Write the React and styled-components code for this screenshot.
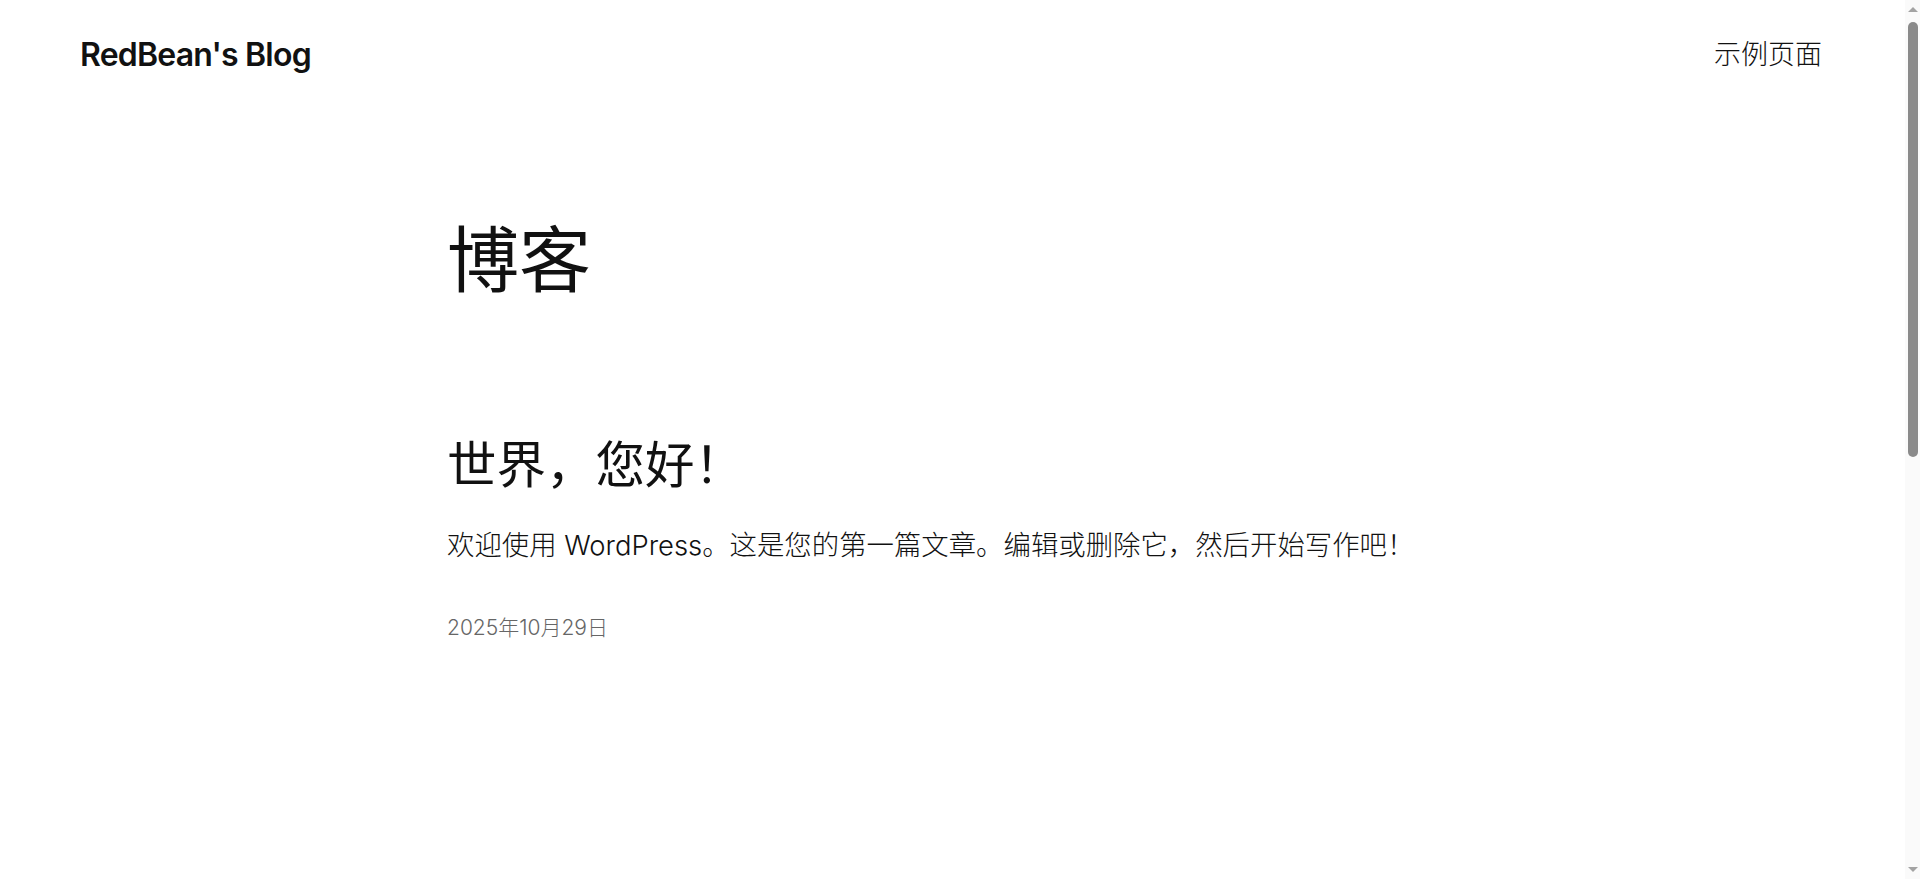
import React from 'react'
import styled, { createGlobalStyle } from 'styled-components'

const GlobalStyle = createGlobalStyle`
  html, body {
    margin: 0;
    padding: 0;
    background: #fff;
  }
  body {
    font-family: Inter, "Noto Sans CJK SC", sans-serif;
    color: #111;
  }
  * { box-sizing: border-box; }
`

// classic 15px scrollbar gutter, drawn over the right edge like the browser's own
const Scrollbar = styled.div`
  position: fixed;
  top: 0;
  right: 0;
  width: 15px;
  height: 100vh;
  background: #fafafa;
  display: flex;
  flex-direction: column;
  align-items: center;
`

const Arrow = styled.div`
  width: 0;
  height: 0;
  margin: ${(p) => (p.$down ? 'auto 0 7px' : '7px 0 0')};
  border-left: 5px solid transparent;
  border-right: 5px solid transparent;
  ${(p) =>
    p.$down
      ? 'border-top: 5px solid #a3a3a3;'
      : 'border-bottom: 5px solid #a3a3a3;'}
`

const Thumb = styled.div`
  width: 10px;
  height: 435px;
  margin-top: 10px;
  border-radius: 5px;
  background: #8a8a8a;
`

const Page = styled.div`
  min-height: 1707px;
  padding-right: 15px;
  display: flex;
  flex-direction: column;
`

const Header = styled.header`
  height: 110px;
  display: flex;
  align-items: center;
  justify-content: space-between;
  padding: 0 83px 0 80px;
`

const SiteTitle = styled.a`
  font-size: 32px;
  font-weight: 600;
  letter-spacing: -0.025em;
  color: #111;
  text-decoration: none;
  line-height: 1.2;
`

const Nav = styled.nav`
  font-size: 27px;
  line-height: 1.2;
  color: #111;
  font-weight: 300;
`

const Main = styled.main`
  width: 1011px;
  margin: 0 auto;
  padding-top: 110px;
`

const PageTitle = styled.h1`
  margin: 0;
  font-size: 72px;
  font-weight: 400;
  line-height: 1.1;
`

const PostList = styled.ul`
  list-style: none;
  margin: 137px 0 0;
  padding: 0;
`

const Post = styled.li`
  display: flex;
  flex-direction: column;
`

const PostTitle = styled.h2`
  margin: 0;
  font-size: 49.5px;
  font-weight: 400;
  line-height: 1.2;
`

const Excerpt = styled.p`
  margin: 29px 0 0;
  font-size: 27.4px;
  line-height: 1.5;
  font-weight: 300;
`

const PostDate = styled.time`
  margin-top: 46px;
  font-size: 21px;
  line-height: 1.5;
  color: #666;
  font-weight: 300;
`

const posts = [
  {
    id: 1,
    title: '世界，您好！',
    excerpt: '欢迎使用 WordPress。这是您的第一篇文章。编辑或删除它，然后开始写作吧！',
    date: '2025年10月29日',
  },
]

const App = () => {
  return (
    <>
      <GlobalStyle />
      <Page>
        <Header>
          <SiteTitle href="#">RedBean's Blog</SiteTitle>
          <Nav>示例页面</Nav>
        </Header>
        <Main>
          <PageTitle>博客</PageTitle>
          <PostList>
            {posts.map((post) => (
              <Post key={post.id}>
                <PostTitle>{post.title}</PostTitle>
                <Excerpt>{post.excerpt}</Excerpt>
                <PostDate>{post.date}</PostDate>
              </Post>
            ))}
          </PostList>
        </Main>
      </Page>
      <Scrollbar aria-hidden="true">
        <Arrow />
        <Thumb />
        <Arrow $down />
      </Scrollbar>
    </>
  )
}

export default App
